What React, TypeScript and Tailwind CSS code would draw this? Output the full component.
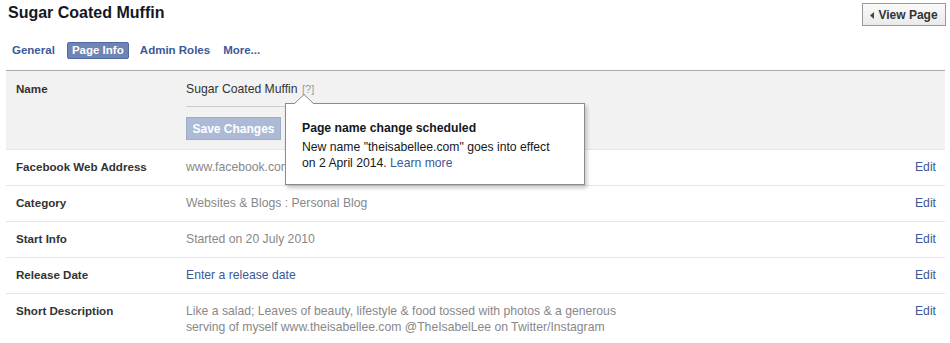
import React from "react";

const rows: { label: string; value: React.ReactNode; link?: boolean }[] = [
  { label: "Facebook Web Address", value: "www.facebook.com/sugarcoatedmuffin" },
  { label: "Category", value: "Websites & Blogs : Personal Blog" },
  { label: "Start Info", value: "Started on 20 July 2010" },
  { label: "Release Date", value: "Enter a release date", link: true },
  {
    label: "Short Description",
    value: (
      <>
        Like a salad; Leaves of beauty, lifestyle &amp; food tossed with photos &amp; a generous
        <br />
        serving of myself www.theisabellee.com @TheIsabelLee on Twitter/Instagram
      </>
    ),
  },
];

export default function App() {
  return (
    <div
      className="relative w-[950px] h-[343px] overflow-hidden bg-white text-[12.2px] text-[#333]"
      style={{ fontFamily: '"Liberation Sans", Arial, sans-serif' }}
    >
      {/* Header */}
      <div className="flex items-start justify-between pl-2 pr-[4px] pt-[3px]">
        <h1 className="text-[16px] font-bold leading-[20px] text-[#141823]">Sugar Coated Muffin</h1>
        <button className="flex h-[23px] w-[84px] items-center justify-center gap-[4px] border border-[#999] bg-gradient-to-b from-[#fafafa] to-[#eaeaea] text-[12px] font-bold text-[#333]">
          <svg width="4" height="7" viewBox="0 0 4 7" className="mt-[1px]">
            <polygon points="4,0 0,3.5 4,7" fill="#444" />
          </svg>
          View Page
        </button>
      </div>

      {/* Tabs */}
      <div className="mt-[16px] flex h-[17px] items-center pl-[12px] text-[11.5px] font-bold text-[#3b5998]">
        <span>General</span>
        <span className="ml-[12px] flex h-[17px] w-[62px] items-center justify-center rounded-[2px] border border-[#4f6aa3] bg-[#6d84b4] text-white">
          Page Info
        </span>
        <span className="ml-[11px]">Admin Roles</span>
        <span className="ml-[13px]">More...</span>
      </div>

      {/* Content */}
      <div className="mx-[6px] mt-[11px] w-[939px] border-t border-[#aaa]">
        {/* Name section */}
        <div className="flex border-b border-[#e5e5e5] bg-[#f2f2f2] pl-[10px] pt-[10px] pb-[9px]">
          <div className="w-[170px] text-[11.6px] font-bold leading-[16px] text-[#333]">Name</div>
          <div className="flex flex-col">
            <div className="w-[380px] border-b border-[#ccc] pb-[9px] leading-[16px] text-[#333]">
              Sugar Coated Muffin <span className="ml-[1px] text-[11px] text-[#999]">[?]</span>
            </div>
            <div className="mt-[10px]">
              <button className="h-[23px] w-[95px] border border-[#9eabc8] bg-[#adbad6] text-[12px] font-bold text-white">
                Save Changes
              </button>
            </div>
          </div>
        </div>

        {rows.map((r, i) => (
          <div
            key={r.label}
            className={`flex pl-[10px] pr-[9px] pt-[9px] pb-[10px] leading-[16px] ${
              i < rows.length - 1 ? "border-b border-[#e5e5e5]" : ""
            }`}
          >
            <div className="w-[170px] shrink-0 text-[11.6px] font-bold text-[#333]">{r.label}</div>
            <div className={`flex-1 ${r.link ? "text-[#3b5998]" : "text-[#888]"}`}>{r.value}</div>
            <div className="text-[#3b5998]">Edit</div>
          </div>
        ))}
      </div>

      {/* Popup */}
      <div className="absolute left-[285px] top-[103px] h-[82px] w-[300px] border border-[#8b8b8b] bg-white pl-[16px] pt-[16px] shadow-[2px_3px_4px_rgba(0,0,0,0.22)]">
        <svg width="20" height="10" viewBox="0 0 20 10" className="absolute left-[8px] top-[-10px]">
          <polygon points="0,10 10,0.5 20,10" fill="white" />
          <polyline points="0,10 10,0.5 20,10" fill="none" stroke="#8b8b8b" strokeWidth="1" />
        </svg>
        <div className="font-bold leading-[16px] text-[#141823]">Page name change scheduled</div>
        <div className="mt-[3px] leading-[16px] text-[#141823]">
          New name "theisabellee.com" goes into effect
          <br />
          on 2 April 2014. <span className="text-[#3b5998]">Learn more</span>
        </div>
      </div>
    </div>
  );
}
